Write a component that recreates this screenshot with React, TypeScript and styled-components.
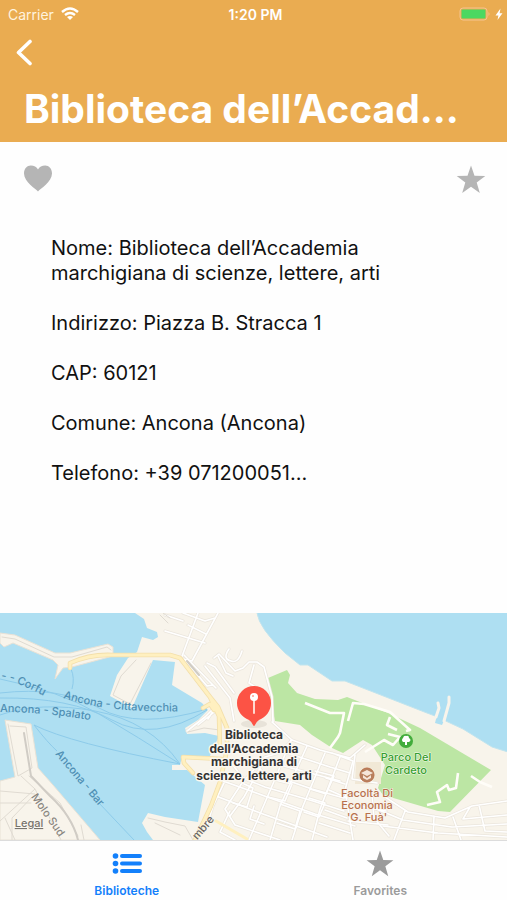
import React from "react";
import styled, { createGlobalStyle } from "styled-components";

const GlobalStyle = createGlobalStyle`
  * { box-sizing: border-box; }
  body { margin: 0; background: #fff; }
  body, button { font-family: Inter, "Liberation Sans", sans-serif; }
`;

const Screen = styled.div`
  display: flex;
  flex-direction: column;
  min-height: 100vh;
  background: #fefefe;
  color: #111;
`;

const Header = styled.header`
  background: #eaac51;
  color: #fff;
  padding-bottom: 6px;
`;

const StatusBar = styled.div`
  display: grid;
  grid-template-columns: 1fr auto 1fr;
  align-items: center;
  height: 28px;
  padding: 0 4px 0 8px;
  font-size: 14px;
`;

const StatusGroup = styled.div<{ $end?: boolean }>`
  display: flex;
  align-items: center;
  justify-content: ${(p) => (p.$end ? "flex-end" : "flex-start")};
  gap: ${(p) => (p.$end ? 4 : 7)}px;
  color: #fff3df;
`;

const Clock = styled.time`
  font-weight: 600;
`;

const IconButton = styled.button`
  display: flex;
  padding: 0;
  border: 0;
  background: none;
  color: inherit;
  cursor: pointer;
`;

const NavRow = styled.nav`
  display: flex;
  height: 54px;
  padding: 10px 14px;
`;

const Title = styled.h1`
  margin: 0;
  padding: 0 24px;
  font-size: 39px;
  line-height: 54px;
  font-weight: 700;
  white-space: nowrap;
  overflow: hidden;
`;

const Actions = styled.div`
  display: flex;
  justify-content: space-between;
  padding: 22px 20px 0 22px;
  color: #b5b5b5;
`;

const Details = styled.section`
  flex: 1;
  padding: 40px 51px 40px;
  font-size: 20px;
  line-height: 25px;
`;

const Detail = styled.p`
  max-width: 360px;
  margin: 0 0 25px;
`;

const MapView = styled.svg`
  display: block;
  width: 100%;
  height: 227px;
  background: #f8f4eb;
  font-family: Inter, "Liberation Sans", sans-serif;
`;

const FerryText = styled.text`
  font-size: 11px;
  font-weight: 500;
  fill: #4f8fb4;
`;

const PlaceText = styled.text<{ $color: string; $bold?: boolean }>`
  font-size: ${(p) => (p.$bold ? 12 : 11)}px;
  font-weight: ${(p) => (p.$bold ? 700 : 500)};
  text-anchor: middle;
  fill: ${(p) => p.$color};
  stroke: #fbf8f1;
  stroke-width: ${(p) => (p.$bold ? 3 : 1)}px;
  stroke-linejoin: round;
  paint-order: stroke;
`;

const TabBar = styled.nav`
  display: grid;
  grid-template-columns: 1fr 1fr;
  height: 60px;
  border-top: 1px solid #dcdcdc;
  background: #fefefe;
`;

const Tab = styled.button<{ $active?: boolean }>`
  display: flex;
  flex-direction: column;
  align-items: center;
  gap: 4px;
  padding: 8px 0 0;
  border: 0;
  background: none;
  font-size: 12px;
  line-height: 16px;
  font-weight: 600;
  color: ${(p) => (p.$active ? "#1380fb" : "#9b9b9b")};
  cursor: pointer;
`;

const Star = ({ size = 32 }: { size?: number }) => (
  <svg width={size} height={size} viewBox="0 0 32 32" fill="currentColor" aria-hidden="true">
    <path d="M16 1.5 L19.5 11.8 L30.3 12 L21.7 18.4 L24.8 29 L16 22.7 L7.2 29 L10.3 18.4 L1.7 12 L12.5 11.8 Z" />
  </svg>
);

const STREETS = [
  "M198 0 L181 46 L192 48 L218 0 M183 0 L205 8 L215 5 M165 18 L205 30 M188 12 L206 21 M165 2 L183 8",
  "M184 42 L208 67 L216 75 M184 46 L207 73 L213 72 M205 53 L230 85 L234 108 M207 50 L215 54 L234 80 M214 45 L219 41 L235 58 L243 55 L249 49 L257 49 L264 54 L272 84 L273 109",
  "M229 36 Q222 46 231 48 Q238 51 242 38 M218 43 L226 60 L233 63 M254 52 L249 70 L254 73 M213 96 L205 104 L187 118 M218 96 L198 112 M210 91 L215 95 L208 106",
  "M272 109 L292 127 L320 137 L350 145 L365 132 M332 140 L353 148 L345 177 L353 227 M292 127 L279 140 L265 144 L242 170 L225 196 L235 212 L280 227",
  "M223 168 L270 185 L315 201 L355 213 M216 183 L263 201 L327 224 M232 151 L243 165 L265 174 L313 188 L344 198 M252 148 L263 159 L312 176 L344 185 M264 145 L280 152 L340 168",
  "M281 138 L330 154 L350 160 M291 127 L275 166 L249 227 M307 133 L280 193 L270 227 M325 140 L303 193 L292 227 M340 144 L320 196 L312 227 M265 146 L244 184 L230 203",
  "M224 170 L213 193 L207 212 M242 170 L253 175 L247 194 L233 190 M275 167 L292 171 L285 188 L268 184 M280 191 L300 198 L295 216 L277 210 M315 158 L334 163 L326 181 L310 176 M309 185 L325 190 L319 204 L304 199",
  "M329 177 L347 185 M325 197 L347 205 M319 210 L350 220 M326 165 L345 171 M254 193 L250 206 L264 211 M230 198 L220 219 L235 227",
  "M385 184 L408 199 L445 205 L472 193 L507 188 M374 195 L403 207 L452 214 L507 211 M383 213 L438 220 L507 224 M405 198 L394 227 M434 203 L433 227 M453 204 L461 227 M470 194 L463 206 L507 202 M479 192 L485 218 L507 219",
  "M372 182 L374 205 L389 223 M344 190 L386 198 M348 208 L388 212 M355 142 L352 166 L377 170",
];

const PARK_PATHS =
  "M305 90 L330 100 H344 L340 120 L338 124 L330 135 M348 108 L353 90 L364 91 L390 99 L410 117 L406 118 M390 104 L387 112 L397 117 M388 121 L400 124 L393 132 L384 127 L365 139 M427 192 L440 189 L437 179 L447 172 L449 177 L456 175 L458 160 M471 163 L480 169 L492 174";

const HIGHWAYS =
  "M70 55 V50 Q90 41 112 42 H170 L180 45 L210 84 L218 94 L227 115 V137 L220 169 L211 193 L195 227 M210 84 L219 103 L220 137 M203 95 L210 91 L214 97 M222 146 L183 144 L184 150 L193 160";

const Waterfront = () => (
  <g>
    <path fill="#aedff2" d="M0 0 H135 L144 6 L147 15 L157 19 L158 24 L153 27 L142 24 L137 39 L128 45 L117 62 L110 83 L132 95 L153 47 L175 49 L172 72 L202 90 L208 97 L198 107 L185 115 L187 121 L205 120 L219 123 L209 145 L182 144 L180 152 L172 152 L172 157 L187 157 L193 162 L205 172 L198 209 L165 204 L148 200 L142 210 L147 219 L153 227 H0 Z" />
    <path fill="#f8f4eb" stroke="#e8e2d6" d="M0 20 L15 22 L55 40 L70 40 L108 31 L113 34 V43 L72 54 L63 55 L55 66 L58 52 L53 47 L13 30 L4 34 L0 30 Z M5 107 L31 111 L38 155 L53 172 L100 227 H0 V168 L15 164 Z" />
    <path fill="#aedff2" stroke="#c1e4ee" d="M257 0 Q259 15 285 40 L300 52 H308 L332 68 H345 L427 100 L435 103 L463 116 L492 134 L508 139 V-1 H257 Z" />
    <path fill="#aedff2" d="M438 98 L447 101 L442 112 L435 110 Z" />
    <path fill="none" stroke="#f8f4eb" strokeWidth="3" strokeLinecap="round" strokeLinejoin="round" d="M438 90 L439 95 L436 104 M449 84 L449 90 L444 108" />
    <path fill="#bce6a4" d="M268 65 L287 57 L290 62 L288 70 L297 80 L315 86 L338 87 L347 84 L388 100 L420 115 L491 157 L450 199 L438 198 L383 182 L378 175 L385 152 L372 132 L363 127 L343 140 L332 135 L312 122 L300 112 L275 108 L270 84 Z" />
    <path fill="#f1e8d6" d="M356 149 H381 V171 H355 Z" />
  </g>
);

const Ferries = () => (
  <g fill="none" stroke="#8dcbea" strokeWidth="1">
    <path d="M0 66 Q60 78 99 101 T180 151 M0 80 Q60 73 99 95 T207 96 M0 85 Q70 84 112 107 T207 97 M0 102 Q40 88 95 98 T180 151 M34 112 Q70 130 180 151" />
    <path d="M34 112 Q48 130 57 138 M99 190 L134 227 M71 56 Q75 65 72 76" />
  </g>
);

const Roads = () => (
  <g fill="none" strokeLinecap="round" strokeLinejoin="round">
    {STREETS.map((d) => (
      <path key={d} d={d} stroke="#ebe6dd" strokeWidth="3" />
    ))}
    {STREETS.map((d) => (
      <path key={d} d={d} stroke="#ffffff" strokeWidth="1.6" />
    ))}
    <path d={PARK_PATHS} stroke="#fffdf8" strokeWidth="2.6" strokeLinecap="butt" />
    <path stroke="#e0dbd2" d="M2 24 L15 26 L54 44 L72 44 L107 34 L111 37 M136 47 L121 63 L113 82 L130 91 L151 50 M160 2 L168 10 M163 0 L170 5" />
    <path stroke="#e0dbd2" d="M8 111 L18 163 L32 155 L26 114 L10 113 M21 163 L35 176 L0 208 M0 178 L35 181 L12 205 V227 M0 190 L31 190 M35 176 L61 227 M29 163 L60 190 L78 223 M5 205 L15 227 M81 212 L84 227 M148 205 L165 209 L185 213 L193 227 M155 210 L180 222 M188 119 L204 115 L220 117" />
    <path stroke="#d0ccc5" strokeWidth="2" d="M24 120 L31 163 L50 183 Q72 203 78 227 M187 48 L199 62" />
    <path d={HIGHWAYS} stroke="#f3dfaa" strokeWidth="4.6" />
    <path d={HIGHWAYS} stroke="#fff0c0" strokeWidth="3" />
    <path stroke="#fff0c0" strokeWidth="3" d="M216 208 L247 226" />
  </g>
);

const MapLabels = () => (
  <g>
    <defs>
      <path id="corfu" d="M1 66 Q18 69 44 83" />
      <path id="spalato" d="M0 99 Q48 99 100 109" />
      <path id="cittavecchia" d="M63 85 Q110 101 190 98" />
    </defs>
    <FerryText><textPath href="#corfu">- - Corfu</textPath></FerryText>
    <FerryText><textPath href="#spalato">Ancona - Spalato</textPath></FerryText>
    <FerryText><textPath href="#cittavecchia">Ancona - Cittavecchia</textPath></FerryText>
    <FerryText transform="translate(55 141) rotate(50)">Ancona - Bar</FerryText>
    <PlaceText $color="#8a867f" transform="translate(45 204) rotate(55)">Molo Sud</PlaceText>
    <PlaceText $color="#68645f" transform="translate(206 217) rotate(-50)">mbre</PlaceText>
    <PlaceText $color="#35a02f" x="406" y="148">Parco Del</PlaceText>
    <PlaceText $color="#35a02f" x="406" y="161">Cardeto</PlaceText>
    <PlaceText $color="#b8714c" x="367" y="184">Facoltà Di</PlaceText>
    <PlaceText $color="#b8714c" x="367" y="196">Economia</PlaceText>
    <PlaceText $color="#b8714c" x="367" y="208">'G. Fuà'</PlaceText>
    <PlaceText $color="#77736d" x="29" y="214" textDecoration="underline">Legal</PlaceText>
    <PlaceText $bold $color="#343434" x="254" y="126">Biblioteca</PlaceText>
    <PlaceText $bold $color="#343434" x="254" y="140">dell’Accademia</PlaceText>
    <PlaceText $bold $color="#343434" x="254" y="153">marchigiana di</PlaceText>
    <PlaceText $bold $color="#343434" x="254" y="167">scienze, lettere, arti</PlaceText>
  </g>
);

const Markers = () => (
  <g>
    <circle cx="406" cy="128" r="7" fill="#42ac3b" />
    <path fill="#fff" d="M405 129 H403 Q401 127 403 125 Q404 122 406 123 Q409 122 409 125 Q412 127 409 129 H407 V132 H405 Z" />
    <circle cx="367" cy="162" r="7" fill="#b8805f" stroke="#b8714c" />
    <path fill="#f6e6da" d="M361 160 L367 157 L373 160 L367 163 Z M363 162 L367 165 L371 162 V165 L367 167 L363 165 Z" />
    <ellipse cx="254" cy="111" rx="13" ry="4" fill="#7b6a5c" opacity=".12" />
    <path fill="#fc5345" d="M237 90 A17 17 0 1 1 271 90 C271 98 266 104 259 107 Q256 109 255 112 Q254 114 253 112 Q252 109 249 107 C242 104 237 98 237 90 Z" />
    <path d="M254 87 V100" stroke="#ffd8cf" strokeWidth="2" strokeLinecap="round" />
    <circle cx="254" cy="84" r="4" fill="#fff" />
    <circle cx="253" cy="83" r="1" fill="#fc9c90" />
  </g>
);

const DETAILS = [
  ["Nome", "Biblioteca dell’Accademia marchigiana di scienze, lettere, arti"],
  ["Indirizzo", "Piazza B. Stracca 1"],
  ["CAP", "60121"],
  ["Comune", "Ancona (Ancona)"],
  ["Telefono", "+39 071200051..."],
];

export default function App() {
  return (
    <Screen>
      <GlobalStyle />
      <Header>
        <StatusBar>
          <StatusGroup>
            Carrier
            <svg width="18" height="14" viewBox="0 0 18 14" fill="none" stroke="#fff" strokeWidth="2.4" aria-hidden="true">
              <path d="M1 5 Q9 -2 17 5 M4 8 Q9 4 14 8" />
              <path fill="#fff" stroke="none" d="M6 10 Q9 7.8 12 10 L9 13 Z" />
            </svg>
          </StatusGroup>
          <Clock>1:20 PM</Clock>
          <StatusGroup $end>
            <svg width="32" height="14" viewBox="0 0 32 14" aria-hidden="true">
              <rect x="1" y="1" width="27" height="12" rx="3" fill="none" stroke="#f5c491" />
              <rect x="2.5" y="2.5" width="24" height="9" rx="1" fill="#4cd861" />
              <path d="M29.5 5 Q31.5 7 29.5 9 Z" fill="#f5c491" />
            </svg>
            <svg width="8" height="13" viewBox="0 0 8 13" fill="#fff" aria-hidden="true">
              <path d="M5.5 0.5 L0.5 7.4 H3.4 L2.5 12 L7.5 5.2 H4.6 Z" />
            </svg>
          </StatusGroup>
        </StatusBar>
        <NavRow>
          <IconButton type="button" aria-label="Back">
            <svg width="20" height="28" viewBox="0 0 20 28" fill="none" stroke="currentColor" strokeWidth="3.6" strokeLinecap="round" strokeLinejoin="round" aria-hidden="true">
              <path d="M16 3.5 L4.5 14.5 L16 25.5" />
            </svg>
          </IconButton>
        </NavRow>
        <Title>Biblioteca dell’Accad...</Title>
      </Header>
      <Actions>
        <IconButton type="button" aria-label="Like">
          <svg width="32" height="32" viewBox="0 0 32 32" fill="currentColor" aria-hidden="true">
            <path d="M16 27.5 C14 25 2 18 2 9.5 C2 4.5 5 1.5 8.8 1.5 C12 1.5 14.7 2.8 16 5.5 C17.3 2.8 20 1.5 23.2 1.5 C27 1.5 30 4.5 30 9.5 C30 18 18 25 16 27.5 Z" />
          </svg>
        </IconButton>
        <IconButton type="button" aria-label="Favorite">
          <Star />
        </IconButton>
      </Actions>
      <Details>
        {DETAILS.map(([label, value]) => (
          <Detail key={label}>{`${label}: ${value}`}</Detail>
        ))}
      </Details>
      <MapView viewBox="0 0 507 227" preserveAspectRatio="xMidYMid slice" role="img" aria-label="Map of Ancona">
        <Waterfront />
        <Ferries />
        <Roads />
        <Markers />
        <MapLabels />
      </MapView>
      <TabBar>
        <Tab type="button" $active>
          <svg width="32" height="30" viewBox="0 0 32 30" fill="currentColor" aria-hidden="true">
            <circle cx="4.5" cy="7" r="2.8" />
            <circle cx="4.5" cy="14.5" r="2.8" />
            <circle cx="4.5" cy="22" r="2.8" />
            <rect x="9" y="5" width="22" height="4" rx="2" />
            <rect x="9" y="12.5" width="22" height="4" rx="2" />
            <rect x="9" y="20" width="22" height="4" rx="2" />
          </svg>
          Biblioteche
        </Tab>
        <Tab type="button">
          <Star size={30} />
          Favorites
        </Tab>
      </TabBar>
    </Screen>
  );
}
